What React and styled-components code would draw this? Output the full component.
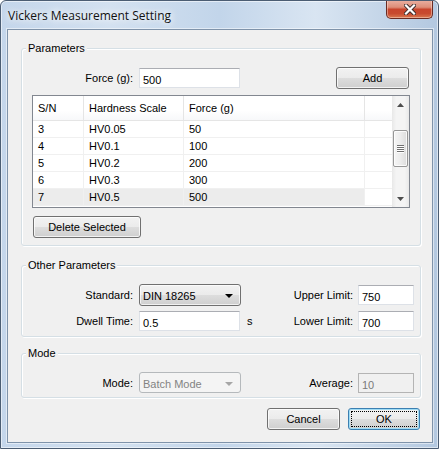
import React from "react";
import styled, { createGlobalStyle } from "styled-components";

const rows = [
  { sn: 3, scale: "HV0.05", force: 50 },
  { sn: 4, scale: "HV0.1", force: 100 },
  { sn: 5, scale: "HV0.2", force: 200 },
  { sn: 6, scale: "HV0.3", force: 300 },
  { sn: 7, scale: "HV0.5", force: 500, selected: true },
];

export default function App() {
  return (
    <>
      <GlobalStyle />
      <Window>
        <TitleBar>
          <Title>Vickers Measurement Setting</Title>
          <CloseButton>
            <svg width="12" height="11" viewBox="0 0 12 11">
              <path d="M2 1.5 L10 9.5 M10 1.5 L2 9.5" stroke="#3a2a2a" strokeWidth="4" strokeLinecap="square" />
              <path d="M2 1.5 L10 9.5 M10 1.5 L2 9.5" stroke="#fff" strokeWidth="2.2" strokeLinecap="square" />
            </svg>
          </CloseButton>
        </TitleBar>
        <Client>
          <Group $top={18} $pad="18px 10px 7px 10px">
            <GroupTitle>Parameters</GroupTitle>
            <Row $h={22}>
              <FieldLabel $w={101}>Force (g):</FieldLabel>
              <TextBox $w={101}>500</TextBox>
              <PushButton $w={73} $push>Add</PushButton>
            </Row>
            <ListBox>
              <Table>
                <HeaderRow>
                  <HeaderCell>S/N</HeaderCell>
                  <HeaderCell>Hardness Scale</HeaderCell>
                  <HeaderCell>Force (g)</HeaderCell>
                  <HeaderCell />
                </HeaderRow>
                {rows.map((r) => (
                  <DataRow key={r.sn} $selected={r.selected}>
                    <Cell>{r.sn}</Cell>
                    <Cell>{r.scale}</Cell>
                    <Cell>{r.force}</Cell>
                    <Cell $blank />
                  </DataRow>
                ))}
              </Table>
              <ScrollBar>
                <Arrow>
                  <svg width="7" height="4" viewBox="0 0 7 4"><path d="M0 4 L3.5 0 L7 4Z" fill="#4d4d4d" /></svg>
                </Arrow>
                <Track>
                  <Thumb>
                    <Grip />
                    <Grip />
                    <Grip />
                    <Grip />
                  </Thumb>
                </Track>
                <Arrow>
                  <svg width="7" height="4" viewBox="0 0 7 4"><path d="M0 0 L7 0 L3.5 4Z" fill="#4d4d4d" /></svg>
                </Arrow>
              </ScrollBar>
            </ListBox>
            <PushButton $w={108} $mt={8} $ml={1}>Delete Selected</PushButton>
          </Group>

          <Group $top={19} $pad="18px 6px 5px 10px">
            <GroupTitle>Other Parameters</GroupTitle>
            <Row $h={22}>
              <FieldLabel $w={101}>Standard:</FieldLabel>
              <Combo $w={102}>
                DIN 18265
                <ComboArrow />
              </Combo>
              <Spacer />
              <FieldLabel>Upper Limit:</FieldLabel>
              <TextBox $w={56}>750</TextBox>
            </Row>
            <Row $h={21} $mt={4}>
              <FieldLabel $w={101}>Dwell Time:</FieldLabel>
              <TextBox $w={101}>0.5</TextBox>
              <Suffix>s</Suffix>
              <Spacer />
              <FieldLabel>Lower Limit:</FieldLabel>
              <TextBox $w={56}>700</TextBox>
            </Row>
          </Group>

          <Group $top={16} $pad="18px 6px 4px 10px">
            <GroupTitle>Mode</GroupTitle>
            <Row $h={21}>
              <FieldLabel $w={101}>Mode:</FieldLabel>
              <Combo $w={102} $disabled>
                Batch Mode
                <ComboArrow $disabled />
              </Combo>
              <Spacer />
              <FieldLabel>Average:</FieldLabel>
              <TextBox $w={56} $disabled>10</TextBox>
            </Row>
          </Group>

          <ButtonBar>
            <PushButton $w={73}>Cancel</PushButton>
            <PushButton $w={72} $default>OK</PushButton>
          </ButtonBar>
        </Client>
      </Window>
    </>
  );
}

const GlobalStyle = createGlobalStyle`
  html, body {
    margin: 0;
    padding: 0;
    background: #fff;
  }
  body {
    font-family: "Liberation Sans", Arial, sans-serif;
    font-size: 11px;
    color: #000;
  }
`;

const Window = styled.div`
  width: 439px;
  height: 449px;
  box-sizing: border-box;
  display: flex;
  flex-direction: column;
  padding: 0 5px 5px 6px;
  border: 1px solid #4b5d73;
  border-radius: 6px 6px 0 0;
  background: linear-gradient(90deg, #c4d6eb 0%, #d3e1f0 25%, #c2d5ea 50%, #d9e5f2 72%, #b3c8e0 100%);
  box-shadow: inset 0 0 0 1px rgba(255, 255, 255, 0.55);
  overflow: hidden;
`;

const TitleBar = styled.div`
  height: 28px;
  display: flex;
  align-items: flex-start;
  justify-content: space-between;
`;

const Title = styled.div`
  font-family: "Open Sans", "Liberation Sans", sans-serif;
  font-size: 12px;
  line-height: 16px;
  padding: 7px 0 0 1px;
  color: #111;
  text-shadow: 0 0 6px #fff, 0 0 10px #fff;
`;

const CloseButton = styled.div`
  width: 45px;
  height: 18px;
  margin: -1px 0 0 0;
  display: flex;
  align-items: center;
  justify-content: center;
  border: 1px solid #6a2b23;
  border-top: none;
  border-radius: 0 0 5px 5px;
  background: linear-gradient(#eab1a3 0%, #dd8e79 40%, #c8452d 52%, #c84a2f 75%, #d9784f 100%);
  box-shadow: inset 0 0 0 1px rgba(255, 230, 220, 0.45);
`;

const Client = styled.div`
  flex: 1;
  display: flex;
  flex-direction: column;
  padding: 0 11px 0 13px;
  background: #f0f0f0;
  border: 1px solid #7f93aa;
  box-shadow: 0 0 0 1px rgba(255, 255, 255, 0.5);
`;

const Group = styled.div`
  position: relative;
  display: flex;
  flex-direction: column;
  margin-top: ${(p) => p.$top}px;
  padding: ${(p) => p.$pad};
  border: 1px solid #d5dfe5;
  border-radius: 3px;
  box-shadow: inset 1px 1px 0 #fff, 1px 1px 0 #fff;
`;

const GroupTitle = styled.span`
  position: absolute;
  top: -8px;
  left: 4px;
  padding: 0 2px;
  line-height: 14px;
  background: #f0f0f0;
`;

const Row = styled.div`
  display: flex;
  align-items: center;
  height: ${(p) => p.$h}px;
  margin-top: ${(p) => p.$mt || 0}px;
`;

const FieldLabel = styled.span`
  width: ${(p) => (p.$w ? `${p.$w}px` : "auto")};
  text-align: right;
  margin-right: ${(p) => (p.$w ? 6 : 5)}px;
  white-space: nowrap;
`;

const Spacer = styled.div`
  flex: 1;
`;

const Suffix = styled.span`
  margin-left: 7px;
`;

const TextBox = styled.div`
  width: ${(p) => p.$w}px;
  height: 20px;
  box-sizing: border-box;
  padding: 4px 0 0 3px;
  line-height: 14px;
  background: ${(p) => (p.$disabled ? "#f0f0f0" : "#fff")};
  color: ${(p) => (p.$disabled ? "#7a7a7a" : "#000")};
  border: 1px solid ${(p) => (p.$disabled ? "#b4b4b4" : "#dde1e7")};
  border-top-color: ${(p) => (p.$disabled ? "#b4b4b4" : "#abadb3")};
`;

const Combo = styled.div`
  width: ${(p) => p.$w}px;
  height: ${(p) => (p.$disabled ? 21 : 22)}px;
  box-sizing: border-box;
  display: flex;
  align-items: center;
  justify-content: space-between;
  padding: 2px 7px 0 3px;
  color: ${(p) => (p.$disabled ? "#838383" : "#000")};
  border: 1px solid ${(p) => (p.$disabled ? "#b5b9bc" : "#707070")};
  border-radius: 3px;
  background: ${(p) =>
    p.$disabled
      ? "#f4f4f4"
      : "linear-gradient(#f2f2f2 0%, #ebebeb 50%, #dddddd 51%, #cfcfcf 100%)"};
  box-shadow: ${(p) => (p.$disabled ? "none" : "inset 0 0 0 1px rgba(255,255,255,0.7)")};
`;

const ComboArrow = styled.span`
  width: 0;
  height: 0;
  border-left: 4px solid transparent;
  border-right: 4px solid transparent;
  border-top: 4px solid ${(p) => (p.$disabled ? "#a6a6a6" : "#000")};
`;

const PushButton = styled.div`
  width: ${(p) => p.$w}px;
  height: 22px;
  box-sizing: border-box;
  display: flex;
  align-items: center;
  justify-content: center;
  margin-top: ${(p) => p.$mt || 0}px;
  margin-left: ${(p) => (p.$push ? "auto" : `${p.$ml || 0}px`)};
  margin-right: ${(p) => (p.$push ? 1 : 0)}px;
  border: 1px solid ${(p) => (p.$default ? "#3c7fb1" : "#707070")};
  border-radius: 3px;
  background: linear-gradient(#f2f2f2 0%, #ebebeb 50%, #dddddd 51%, #cfcfcf 100%);
  box-shadow: inset 0 0 0 1px ${(p) => (p.$default ? "#9fdcf5" : "rgba(255,255,255,0.75)")};
  outline: ${(p) => (p.$default ? "1px dotted #000" : "none")};
  outline-offset: -4px;
`;

const ListBox = styled.div`
  display: flex;
  height: 113px;
  box-sizing: border-box;
  margin-top: 6px;
  border: 1px solid #828790;
  background: #fff;
  overflow: hidden;
`;

const Table = styled.div`
  flex: 1;
  display: flex;
  flex-direction: column;
`;

const cols = "51px 100px 181px 1fr";

const HeaderRow = styled.div`
  display: grid;
  grid-template-columns: ${cols};
  height: 25px;
  box-sizing: border-box;
  border-bottom: 1px solid #e5e5e5;
  background: linear-gradient(#ffffff 0%, #ffffff 60%, #f7f8fa 100%);
`;

const HeaderCell = styled.div`
  display: flex;
  align-items: center;
  padding-left: 5px;
  border-right: 1px solid #e5e5e5;
  &:last-child {
    border-right: none;
  }
`;

const DataRow = styled.div`
  display: grid;
  grid-template-columns: ${cols};
  height: 17px;
  flex: none;
  box-sizing: border-box;
  border-bottom: 1px solid #f0f0f0;
  background: ${(p) => (p.$selected ? "#ececec" : "#fff")};
`;

const Cell = styled.div`
  display: flex;
  align-items: center;
  padding-left: 5px;
  border-right: 1px solid #f0f0f0;
  background: ${(p) => (p.$blank ? "#fff" : "transparent")};
  &:last-child {
    border-right: none;
  }
`;

const ScrollBar = styled.div`
  width: 17px;
  display: flex;
  flex-direction: column;
  background: linear-gradient(90deg, #e8e8e8 0%, #f4f4f4 25%, #f4f4f4 75%, #e8e8e8 100%);
`;

const Arrow = styled.div`
  height: 17px;
  display: flex;
  align-items: center;
  justify-content: center;
`;

const Track = styled.div`
  flex: 1;
  padding-top: 17px;
`;

const Thumb = styled.div`
  height: 37px;
  margin: 0 1px;
  box-sizing: border-box;
  display: flex;
  flex-direction: column;
  align-items: center;
  justify-content: center;
  gap: 1px;
  border: 1px solid #979797;
  border-radius: 2px;
  background: linear-gradient(90deg, #f5f5f5 0%, #ececec 50%, #dcdcdc 100%);
  box-shadow: inset 0 0 0 1px rgba(255, 255, 255, 0.8);
`;

const Grip = styled.div`
  width: 7px;
  height: 1px;
  background: #6f6f6f;
  box-shadow: 0 1px 0 #fff;
`;

const ButtonBar = styled.div`
  display: flex;
  justify-content: flex-end;
  gap: 8px;
  margin-top: 10px;
  padding-right: 1px;
`;
